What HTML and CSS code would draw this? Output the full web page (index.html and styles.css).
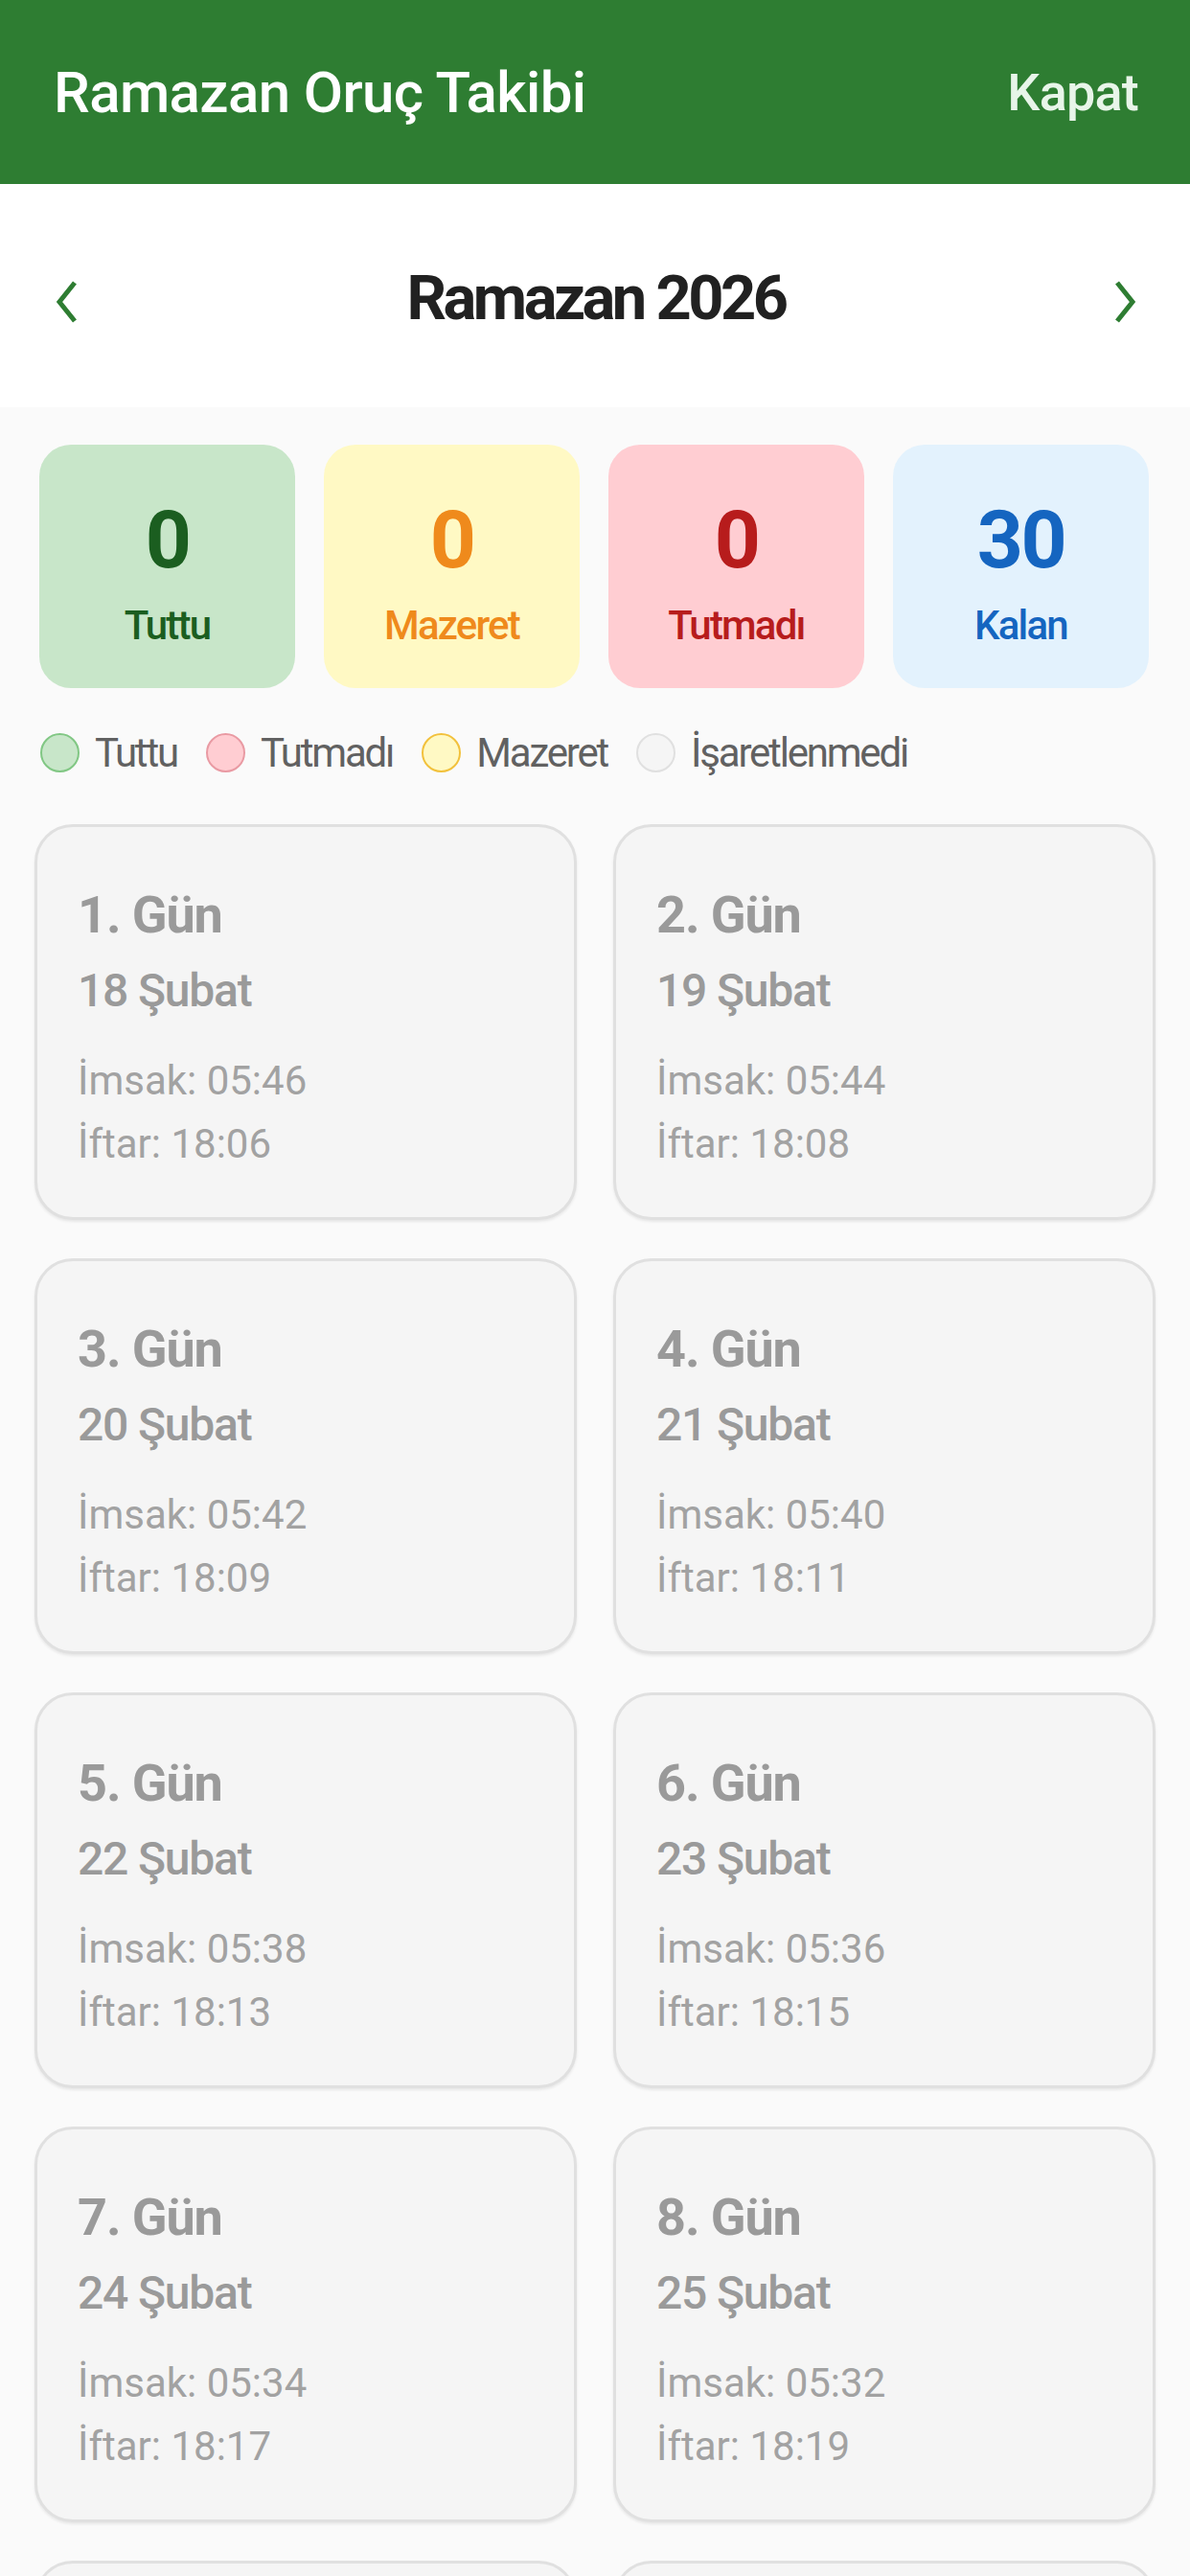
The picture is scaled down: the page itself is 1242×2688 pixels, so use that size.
FILE: index.html
```html
<!DOCTYPE html>
<html lang="tr">
<head>
  <meta charset="UTF-8">
  <title>Ramazan Oruç Takibi</title>
  <meta name="viewport" content="width=device-width, initial-scale=1.0">
  <link rel="stylesheet" href="styles.css">
</head>
<body>
  <!-- Top Bar -->
  <header class="appBar">
    <span class="appTitle">Ramazan Oruç Takibi</span>
    <span class="closeBtn">Kapat</span>
  </header>

  <!-- Month Switcher -->
  <div class="monthNav">
    <svg class="chevron" viewBox="0 0 24 44" width="24" height="44"><polyline points="20,2 4,22 20,42" /></svg>
    <h2 class="monthTitle">Ramazan 2026</h2>
    <svg class="chevron" viewBox="0 0 24 44" width="24" height="44"><polyline points="4,2 20,22 4,42" /></svg>
  </div>

  <main class="content">
    <!-- Summary -->
    <div class="stats">
      <div class="stat stat-kept"><span class="statNum">0</span><span class="statLabel">Tuttu</span></div>
      <div class="stat stat-excuse"><span class="statNum">0</span><span class="statLabel">Mazeret</span></div>
      <div class="stat stat-missed"><span class="statNum">0</span><span class="statLabel">Tutmadı</span></div>
      <div class="stat stat-left"><span class="statNum">30</span><span class="statLabel">Kalan</span></div>
    </div>

    <!-- Legend -->
    <div class="legend">
      <span class="legendItem"><i class="dot dot-kept"></i>Tuttu</span>
      <span class="legendItem"><i class="dot dot-missed"></i>Tutmadı</span>
      <span class="legendItem"><i class="dot dot-excuse"></i>Mazeret</span>
      <span class="legendItem"><i class="dot dot-none"></i>İşaretlenmedi</span>
    </div>

    <!-- Days -->
    <div class="days">
      <div class="day"><div class="dayTitle">1. Gün</div><div class="dayDate">18 Şubat</div><div class="dayTime first">İmsak: 05:46</div><div class="dayTime">İftar: 18:06</div></div>
      <div class="day"><div class="dayTitle">2. Gün</div><div class="dayDate">19 Şubat</div><div class="dayTime first">İmsak: 05:44</div><div class="dayTime">İftar: 18:08</div></div>
      <div class="day"><div class="dayTitle">3. Gün</div><div class="dayDate">20 Şubat</div><div class="dayTime first">İmsak: 05:42</div><div class="dayTime">İftar: 18:09</div></div>
      <div class="day"><div class="dayTitle">4. Gün</div><div class="dayDate">21 Şubat</div><div class="dayTime first">İmsak: 05:40</div><div class="dayTime">İftar: 18:11</div></div>
      <div class="day"><div class="dayTitle">5. Gün</div><div class="dayDate">22 Şubat</div><div class="dayTime first">İmsak: 05:38</div><div class="dayTime">İftar: 18:13</div></div>
      <div class="day"><div class="dayTitle">6. Gün</div><div class="dayDate">23 Şubat</div><div class="dayTime first">İmsak: 05:36</div><div class="dayTime">İftar: 18:15</div></div>
      <div class="day"><div class="dayTitle">7. Gün</div><div class="dayDate">24 Şubat</div><div class="dayTime first">İmsak: 05:34</div><div class="dayTime">İftar: 18:17</div></div>
      <div class="day"><div class="dayTitle">8. Gün</div><div class="dayDate">25 Şubat</div><div class="dayTime first">İmsak: 05:32</div><div class="dayTime">İftar: 18:19</div></div>
      <div class="day"><div class="dayTitle">9. Gün</div><div class="dayDate">26 Şubat</div><div class="dayTime first">İmsak: 05:30</div><div class="dayTime">İftar: 18:20</div></div>
      <div class="day"><div class="dayTitle">10. Gün</div><div class="dayDate">27 Şubat</div><div class="dayTime first">İmsak: 05:28</div><div class="dayTime">İftar: 18:22</div></div>
    </div>
  </main>
</body>
</html>
```

FILE: styles.css
```css
/* Base */
body {
  margin: 0;
  padding: 0;
  background: #fafafa;
  font-family: Roboto, "Noto Sans", sans-serif;
}
/* App bar */
.appBar {
  height: 192px;
  background: #2e7d32;
  display: flex;
  align-items: center;
  justify-content: space-between;
  padding: 0 54px 0 56px;
  box-sizing: border-box;
}
.appTitle {
  color: #fff;
  font-size: 60px;
  font-weight: 500;
  letter-spacing: -0.6px;
}
.closeBtn {
  color: #e8f5e9;
  font-size: 54px;
  font-weight: 500;
  letter-spacing: -0.8px;
}
/* Month switcher */
.monthNav {
  height: 233px;
  background: #fff;
  display: flex;
  align-items: center;
  justify-content: space-between;
  padding: 0 56px 0 58px;
  box-sizing: border-box;
}
.monthTitle {
  margin: 4px 0 0;
  font-size: 65px;
  font-weight: 700;
  letter-spacing: -3.5px;
  color: #212121;
}
.chevron {
  margin-top: 12px;
}
.chevron polyline {
  fill: none;
  stroke: #2e7d32;
  stroke-width: 5;
}
/* Content */
.content {
  padding: 39px 0 0;
}
.stats {
  display: grid;
  grid-template-columns: repeat(4, 1fr);
  gap: 30px;
  padding: 0 43px 0 41px;
}
.stat {
  border-radius: 33px;
  display: flex;
  flex-direction: column;
  align-items: center;
  padding: 50px 0 40px;
}
.statNum {
  font-size: 84px;
  font-weight: 700;
  line-height: 100px;
  letter-spacing: -2.5px;
}
.statLabel {
  font-size: 42px;
  font-weight: 500;
  line-height: 50px;
  margin-top: 14px;
  letter-spacing: -1.8px;
}
.stat-kept { background: #c8e6c9; color: #1b5e20; }
.stat-excuse { background: #fff9c4; color: #ef8a1c; }
.stat-missed { background: #ffcdd2; color: #b71c1c; }
.stat-left { background: #e3f2fd; color: #1565c0; }
/* Legend */
.legend {
  display: flex;
  align-items: center;
  padding: 0 42px;
  margin-top: 45px;
  height: 44px;
}
.legendItem {
  display: flex;
  align-items: center;
  font-size: 42px;
  letter-spacing: -2.2px;
  color: #616161;
  margin-right: 30px;
}
.dot {
  width: 37px;
  height: 37px;
  border-radius: 50%;
  border: 2.5px solid;
  margin-right: 16px;
}
.dot-kept { background: #c8e6c9; border-color: #81c784; }
.dot-missed { background: #ffcdd2; border-color: #e99aa3; }
.dot-excuse { background: #fff9c4; border-color: #f2c13c; }
.dot-none { background: #f5f5f5; border-color: #e0e0e0; }
/* Day cards */
.days {
  display: grid;
  grid-template-columns: 1fr 1fr;
  column-gap: 38px;
  row-gap: 40px;
  padding: 0 36px;
  margin-top: 53px;
}
.day {
  background: #f5f5f5;
  border: 3px solid #e0e0e0;
  border-radius: 40px;
  box-shadow: 0 2px 3px rgba(0,0,0,0.08);
  padding: 60px 42px 51px;
}
.dayTitle {
  font-size: 54px;
  font-weight: 700;
  line-height: 64px;
  letter-spacing: -1.1px;
  color: #9a9a9a;
}
.dayDate {
  font-size: 48px;
  font-weight: 500;
  line-height: 56px;
  margin-top: 19px;
  letter-spacing: -1.2px;
  color: #9a9a9a;
}
.dayTime {
  font-size: 42px;
  line-height: 50px;
  margin-top: 16px;
  color: #a2a2a2;
}
.dayTime.first {
  margin-top: 41px;
}
```
